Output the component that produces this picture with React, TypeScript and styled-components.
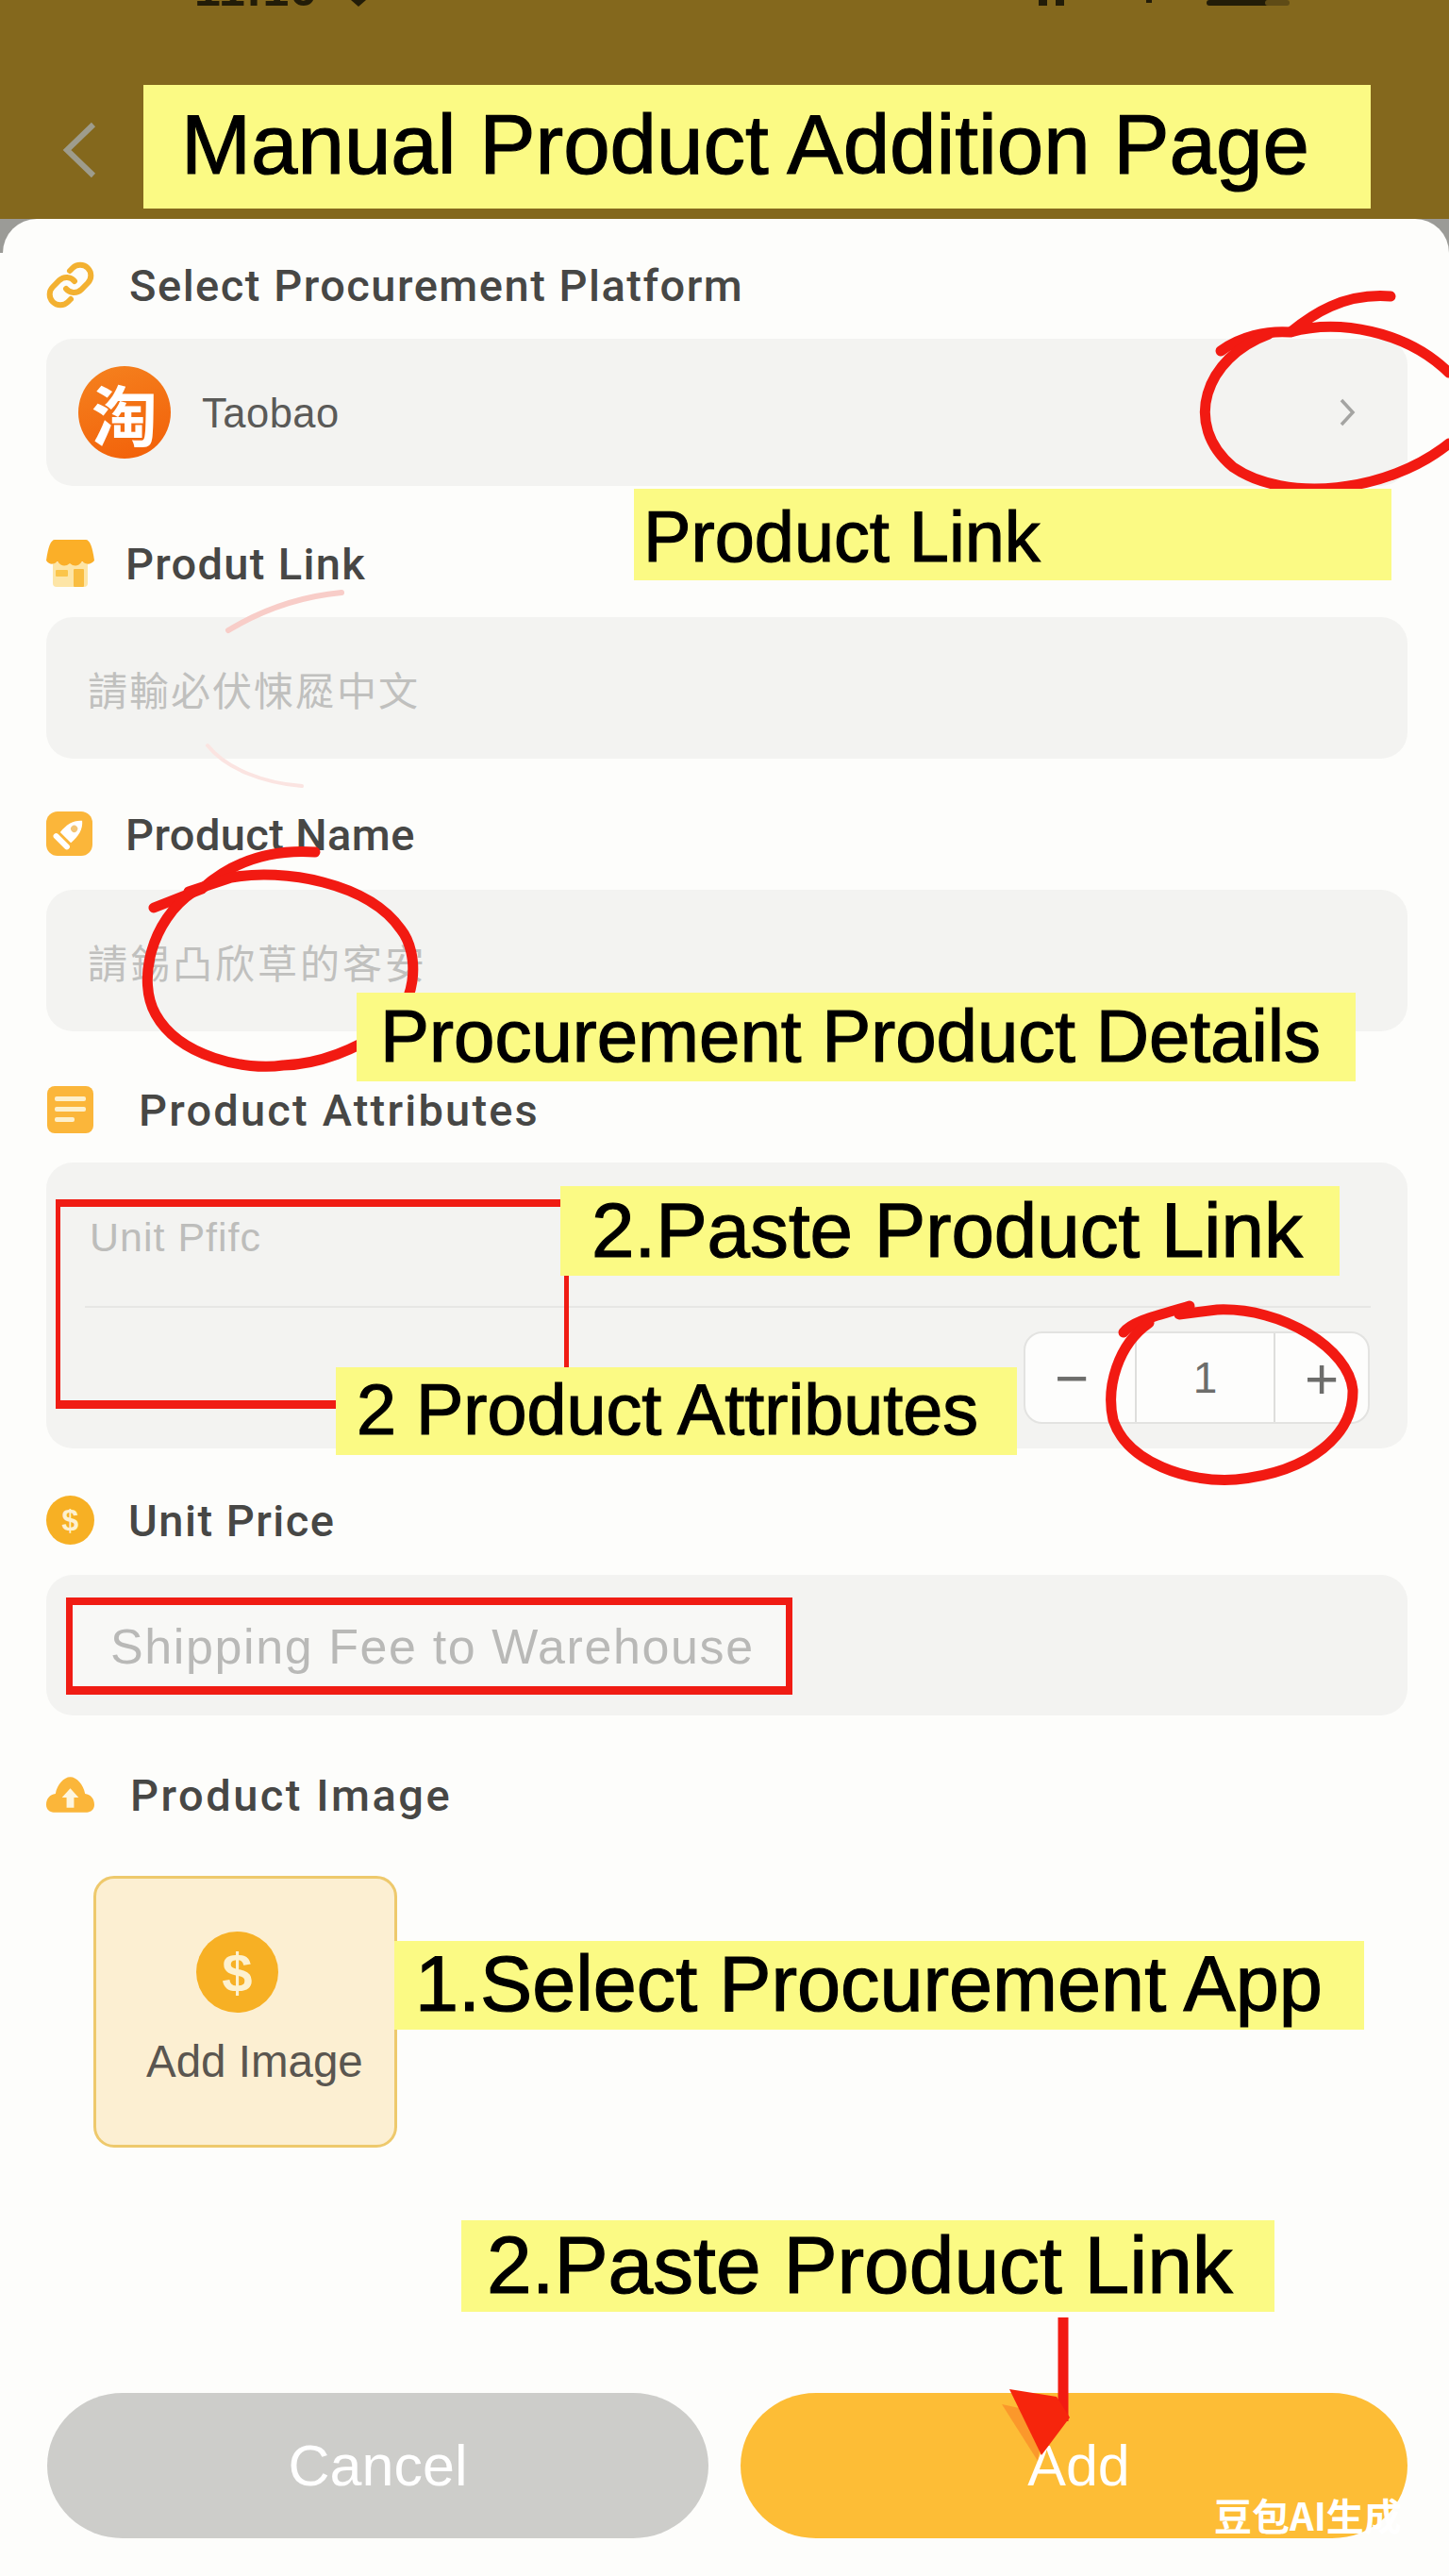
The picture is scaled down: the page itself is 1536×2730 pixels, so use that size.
import React from "react"
import styled, {createGlobalStyle} from "styled-components"

const GlobalStyle = createGlobalStyle`
  html, body {
    margin: 0;
    padding: 0;
    background: #fdfdfb;
  }
  * {
    box-sizing: border-box;
  }
`

const Screen = styled.div`
  position: relative;
  width: 1536px;
  height: 2730px;
  overflow: hidden;
  font-family: "Liberation Sans", Arial, sans-serif;
  background: linear-gradient(#9b9b97 0 268px, #fdfdfb 268px);
`

const Header = styled.header`
  height: 232px;
  background: #84681d;
`

const StatusBar = styled.div`
  display: flex;
  justify-content: space-between;
  align-items: flex-end;
  height: 7px;
  padding: 0 150px 0 206px;
  overflow: hidden;
`

const ClockGroup = styled.div`
  display: flex;
  align-items: flex-end;
  gap: 34px;
`

const Clock = styled.span`
  font-size: 50px;
  font-weight: 700;
  line-height: 0.72;
  letter-spacing: 1px;
  color: #221c08;
`

const NavRow = styled.div`
  display: flex;
  align-items: center;
  gap: 49px;
  padding: 83px 0 0 66px;
`

const BackIcon = styled.svg`
  width: 37px;
  height: 60px;
  margin-top: 6px;
  flex-shrink: 0;
`

const TitleNote = styled.h1`
  width: 1301px;
  height: 131px;
  margin: 0;
  padding-left: 40px;
  background: #fbfa84;
  color: #000;
  font-size: 88.9px;
  font-weight: 400;
  line-height: 127px;
  white-space: nowrap;
  -webkit-text-stroke: 1.2px #000;
`

const Card = styled.main`
  height: 2498px;
  margin-left: 3px;
  padding: 45px 44px 0 46px;
  background: #fdfdfb;
  border-radius: 36px 36px 0 0;
`

const Section = styled.section<{$top: number}>`
  margin-top: ${(p) => p.$top}px;
`

const Label = styled.div<{$gap: number; $spacing: number; $mb: number}>`
  display: flex;
  align-items: center;
  gap: ${(p) => p.$gap}px;
  height: 50px;
  margin-bottom: ${(p) => p.$mb}px;
  font-family: Roboto, "Liberation Sans", sans-serif;
  font-size: 47px;
  font-weight: 500;
  letter-spacing: ${(p) => p.$spacing}px;
  color: #474745;
  white-space: nowrap;
`

const IconSvg = styled.svg`
  width: 51px;
  height: 50px;
  flex-shrink: 0;
`

const Coin = styled.span<{$w: number; $h: number; $size: number}>`
  display: flex;
  align-items: center;
  justify-content: center;
  flex-shrink: 0;
  width: ${(p) => p.$w}px;
  height: ${(p) => p.$h}px;
  border-radius: 50%;
  background: #f7b024;
  color: #fdf1cf;
  font-family: "Liberation Sans", sans-serif;
  font-size: ${(p) => p.$size}px;
  font-weight: 700;
  letter-spacing: 0;
`

const Field = styled.div<{$h: number; $pad: number}>`
  display: flex;
  align-items: center;
  height: ${(p) => p.$h}px;
  padding-left: ${(p) => p.$pad}px;
  background: #f3f3f1;
  border-radius: 28px;
`

const Placeholder = styled.span<{$size: number; $spacing: number}>`
  font-family: "Noto Sans CJK TC", "Liberation Sans", sans-serif;
  font-size: ${(p) => p.$size}px;
  font-weight: 400;
  letter-spacing: ${(p) => p.$spacing}px;
  color: #c0c0be;
  white-space: nowrap;
`

const WidePlaceholder = styled(Placeholder)`
  margin-top: 3px;
  font-family: "Liberation Sans", sans-serif;
  color: #8a8a87;
`

const PlatformRow = styled.div`
  display: flex;
  align-items: center;
  justify-content: space-between;
  height: 156px;
  padding: 0 55px 0 34px;
  background: #f3f3f1;
  border-radius: 28px;
`

const PlatformInfo = styled.div`
  display: flex;
  align-items: center;
  gap: 33px;
`

const PlatformLogo = styled.span`
  display: flex;
  align-items: center;
  justify-content: center;
  width: 98px;
  height: 98px;
  border-radius: 50%;
  background: linear-gradient(160deg, #f5821f, #f25f08);
  color: #fff;
  font-family: "Noto Sans CJK SC", sans-serif;
  font-size: 70px;
  font-weight: 700;
`

const PlatformName = styled.span`
  margin-top: 3px;
  font-size: 43.5px;
  letter-spacing: 0.5px;
  color: #5a5a58;
`

const ChevronIcon = styled.svg`
  width: 18px;
  height: 30px;
`

const AttrBox = styled.div`
  height: 303px;
  background: #f3f3f1;
  border-radius: 28px;
`

const AttrTop = styled.div`
  height: 152px;
  padding: 55px 0 0 46px;
`

const AttrHint = styled.span`
  font-size: 43px;
  letter-spacing: 1px;
  color: #bdbdbb;
`

const AttrDivider = styled.div`
  height: 2px;
  margin: 0 39px 0 41px;
  background: #e6e6e4;
`

const AttrBottom = styled.div`
  display: flex;
  justify-content: flex-end;
  padding: 25px 40px 0 0;
`

const Stepper = styled.div`
  display: flex;
  height: 98px;
  background: #fdfdfc;
  border: 2px solid #e3e3e1;
  border-radius: 20px;
`

const StepCell = styled.div<{$w: number; $size: number; $inset?: number; $divider?: boolean}>`
  display: flex;
  align-items: center;
  justify-content: center;
  width: ${(p) => p.$w}px;
  padding-right: ${(p) => p.$inset ?? 0}px;
  border-left: ${(p) => (p.$divider ? "2px solid #dededc" : "none")};
  font-size: ${(p) => p.$size}px;
  font-weight: 300;
  color: #6d6d6b;
`

const ImageTile = styled.div`
  display: flex;
  flex-direction: column;
  align-items: flex-start;
  width: 322px;
  height: 288px;
  margin-left: 50px;
  padding-top: 56px;
  background: #fcefd2;
  border: 3px solid #eec96c;
  border-radius: 22px;
`

const CoinSlot = styled.div`
  margin-left: 106px;
`

const TileText = styled.span`
  margin: 24px 0 0 53px;
  font-size: 47.5px;
  color: #5a5650;
`

const Actions = styled.div`
  display: flex;
  gap: 34px;
  margin: 260px 0 0 1px;
`

const ActionButton = styled.button<{$w: number; $bg: string; $shift?: number}>`
  width: ${(p) => p.$w}px;
  height: 154px;
  padding: 0 0 0 ${(p) => p.$shift ?? 0}px;
  border: none;
  border-radius: 80px / 77px;
  background: ${(p) => p.$bg};
  color: #fff;
  font-family: "Liberation Sans", sans-serif;
  font-size: 61px;
`

const Overlay = styled.svg`
  position: absolute;
  top: 0;
  left: 0;
  width: 1536px;
  height: 2730px;
  pointer-events: none;
`

const RedFrame = styled.div<{
  $x: number
  $y: number
  $w: number
  $h: number
  $bt: number
  $bs: number
  $bb: number
  $fill: string
}>`
  position: absolute;
  left: ${(p) => p.$x}px;
  top: ${(p) => p.$y}px;
  width: ${(p) => p.$w}px;
  height: ${(p) => p.$h}px;
  background: ${(p) => p.$fill};
  border-style: solid;
  border-color: #f01c14;
  border-width: ${(p) => `${p.$bt}px ${p.$bs}px ${p.$bb}px`};
`

const Note = styled.div<{
  $x: number
  $y: number
  $w: number
  $h: number
  $lh: number
  $pad: number
  $size: number
}>`
  position: absolute;
  left: ${(p) => p.$x}px;
  top: ${(p) => p.$y}px;
  width: ${(p) => p.$w}px;
  height: ${(p) => p.$h}px;
  padding-left: ${(p) => p.$pad}px;
  background: #fbfa84;
  color: #000;
  font-size: ${(p) => p.$size}px;
  line-height: ${(p) => p.$lh}px;
  white-space: nowrap;
  -webkit-text-stroke: 1.2px #000;
`

const Watermark = styled.div`
  position: absolute;
  left: 1287px;
  top: 2644px;
  font-family: "Noto Sans CJK SC", sans-serif;
  font-size: 40px;
  font-weight: 700;
  line-height: 42px;
  color: #fff;
  white-space: nowrap;
`

const notes = [
  {x: 672, y: 518, w: 803, h: 97, lh: 101, pad: 10, size: 75.7, text: "Product Link"},
  {x: 378, y: 1052, w: 1059, h: 94, lh: 92, pad: 25, size: 78, text: "Procurement Product Details"},
  {x: 594, y: 1257, w: 826, h: 95, lh: 93, pad: 33, size: 81.7, text: "2.Paste Product Link"},
  {x: 356, y: 1449, w: 722, h: 93, lh: 91, pad: 22, size: 75.5, text: "2 Product Attributes"},
  {x: 418, y: 2057, w: 1028, h: 94, lh: 92, pad: 22, size: 82.8, text: "1.Select Procurement App"},
  {x: 489, y: 2353, w: 862, h: 97, lh: 95, pad: 27, size: 85.7, text: "2.Paste Product Link"},
]

const StoreIcon = () => (
  <IconSvg viewBox="0 0 51 50">
    <path d="M7 24h37v22q0 4-4 4H11q-4 0-4-4z" fill="#fde5a6" />
    <path d="M9 0h33q6 0 9 22q-6 7-13 1q-6 8-13 2q-7 6-13-2q-7 6-12-1Q3 0 9 0z" fill="#fbaf28" />
    <rect x="10" y="32" width="13" height="7" rx="1" fill="#fbc54a" />
    <rect x="29" y="31" width="11" height="19" rx="1" fill="#f9bd40" />
  </IconSvg>
)

const TagIcon = () => (
  <IconSvg viewBox="0 0 51 50">
    <rect x="0" y="1" width="49" height="47" rx="12" fill="#fbb63a" />
    <g transform="rotate(45 24 25)">
      <path d="M24 5c7 6 9 14 8 25H16c-1-11 1-19 8-25z" fill="#fff" />
      <rect x="13" y="33" width="22" height="6" rx="3" fill="#fff" />
      <circle cx="24" cy="17" r="3.6" fill="#f3c474" />
    </g>
  </IconSvg>
)

const ListIcon = () => (
  <IconSvg viewBox="0 0 51 50">
    <rect x="1" y="0" width="49" height="50" rx="8" fill="#fbb63a" />
    <rect x="9" y="11" width="33" height="5" rx="2" fill="#fdf0cc" />
    <rect x="9" y="22" width="33" height="5" rx="2" fill="#fdf0cc" />
    <rect x="9" y="33" width="21" height="5" rx="2" fill="#fdf0cc" />
  </IconSvg>
)

const CloudIcon = () => (
  <IconSvg viewBox="0 0 52 50">
    <path
      d="M0 36c0-7 4-11 10-12C12 14 19 6 26 6s14 8 16 18c6 1 10 5 10 12c0 5-4 8-8 8H8c-4 0-8-3-8-8z"
      fill="#fbb63a"
    />
    <path d="M26 18l9 10h-5v11h-8V28h-5z" fill="#fdf6e0" />
  </IconSvg>
)

const ChainIcon = () => (
  <IconSvg viewBox="0 0 51 50" fill="none" stroke="#f3b131" strokeWidth="6" strokeLinecap="round">
    <path d="M21 29a11 11 0 0 0 16 1l7-7a11 11 0 0 0-16-16l-3 3" />
    <path d="M30 21a11 11 0 0 0-16-1l-7 7a11 11 0 0 0 16 16l3-3" />
  </IconSvg>
)

const App = () => (
  <Screen>
    <GlobalStyle />
    <Header>
      <StatusBar>
        <ClockGroup>
          <Clock>11:16</Clock>
          <svg width="20" height="7" viewBox="0 0 20 7">
            <path d="M2 0h16l-8 7z" fill="#221c08" />
          </svg>
        </ClockGroup>
        <svg width="290" height="7" viewBox="0 0 290 7">
          <rect x="5" y="0" width="9" height="6" fill="#221c08" />
          <rect x="23" y="0" width="9" height="6" fill="#221c08" />
          <rect x="119" y="0" width="6" height="3" fill="#221c08" />
          <rect x="183" y="0" width="66" height="6" rx="3" fill="#221c08" />
          <rect x="245" y="0" width="26" height="6" rx="3" fill="#5f4b16" />
        </svg>
      </StatusBar>
      <NavRow>
        <BackIcon viewBox="0 0 37 60" fill="none" stroke="#9e9c8c" strokeWidth="6">
          <polyline points="33,3 5,30 33,57" />
        </BackIcon>
        <TitleNote>Manual Product Addition Page</TitleNote>
      </NavRow>
    </Header>

    <Card>
      <Section $top={0}>
        <Label $gap={37} $spacing={1.5} $mb={32}>
          <ChainIcon />
          Select Procurement Platform
        </Label>
        <PlatformRow>
          <PlatformInfo>
            <PlatformLogo>淘</PlatformLogo>
            <PlatformName>Taobao</PlatformName>
          </PlatformInfo>
          <ChevronIcon viewBox="0 0 18 30" fill="none" stroke="#a4a4a2" strokeWidth="3.5">
            <polyline points="3,2 15,15 3,28" />
          </ChevronIcon>
        </PlatformRow>
      </Section>

      <Section $top={57}>
        <Label $gap={33} $spacing={1.3} $mb={32}>
          <StoreIcon />
          Produt Link
        </Label>
        <Field $h={150} $pad={44}>
          <Placeholder $size={42} $spacing={2}>
            請輸必伏悚㞞中文
          </Placeholder>
        </Field>
      </Section>

      <Section $top={55}>
        <Label $gap={33} $spacing={0.4} $mb={34}>
          <TagIcon />
          Product Name
        </Label>
        <Field $h={150} $pad={44}>
          <Placeholder $size={42} $spacing={3}>
            請錫凸欣草的客安
          </Placeholder>
        </Field>
      </Section>

      <Section $top={58}>
        <Label $gap={47} $spacing={2.2} $mb={31}>
          <ListIcon />
          Product Attributes
        </Label>
        <AttrBox>
          <AttrTop>
            <AttrHint>Unit Pfifc</AttrHint>
          </AttrTop>
          <AttrDivider />
          <AttrBottom>
            <Stepper>
              <StepCell $w={116} $size={62} $inset={18}>
                −
              </StepCell>
              <StepCell $w={147} $size={46} $divider>
                1
              </StepCell>
              <StepCell $w={100} $size={62} $divider>
                +
              </StepCell>
            </Stepper>
          </AttrBottom>
        </AttrBox>
      </Section>

      <Section $top={51}>
        <Label $gap={36} $spacing={1.5} $mb={33}>
          <Coin $w={51} $h={52} $size={32}>
            $
          </Coin>
          Unit Price
        </Label>
        <Field $h={149} $pad={68}>
          <WidePlaceholder $size={52} $spacing={1.6}>
            Shipping Fee to Warehouse
          </WidePlaceholder>
        </Field>
      </Section>

      <Section $top={59}>
        <Label $gap={38} $spacing={2.5} $mb={61}>
          <CloudIcon />
          Product Image
        </Label>
        <ImageTile>
          <CoinSlot>
            <Coin $w={87} $h={86} $size={58}>
              $
            </Coin>
          </CoinSlot>
          <TileText>Add Image</TileText>
        </ImageTile>
      </Section>

      <Actions>
        <ActionButton $w={702} $bg="#cdcdca">
          Cancel
        </ActionButton>
        <ActionButton $w={708} $bg="#fdbd36" $shift={10}>
          Add
        </ActionButton>
      </Actions>
    </Card>

    <RedFrame $x={59} $y={1271} $w={544} $h={222} $bt={8} $bs={5} $bb={9} $fill="transparent" />
    <RedFrame
      $x={70}
      $y={1693}
      $w={770}
      $h={103}
      $bt={8}
      $bs={7}
      $bb={9}
      $fill="rgba(255, 255, 255, 0.4)"
    />

    <Overlay viewBox="0 0 1536 2730" fill="none" stroke="#f21a12" strokeWidth="11" strokeLinecap="round">
      <path d="M1474 314c-50-4-84 20-106 38c50-14 122-2 168 43" />
      <path d="M1294 372c20-15 49-22 74-20" />
      <path d="M1345 354c-68 25-92 96-38 141c55 38 163 28 229-25" />
      <path d="M334 903c-44-3-84 7-120 39l-51 20" />
      <path d="M205 945c-45 30-60 95-40 130c25 45 95 60 135 54c40-1 80-19 100-34c45-25 45-85 25-110c-35-50-125-65-180-55l-45 15" />
      <path d="M1261 1384c-36 11-61 16-70 28" />
      <path d="M1218 1402c-33 23-46 68-38 103c15 45 80 67 130 63c80-8 125-48 124-95c-4-43-74-88-144-85l-40 5" />
      <path d="M242 668c38-23 78-36 120-40" stroke="#f8cdc8" strokeWidth="6" />
      <path d="M220 790c20 25 60 40 100 43" stroke="#fbe4e1" strokeWidth="4" />
      <path d="M1127 2456v110" strokeWidth="11" strokeLinecap="butt" />
      <path d="M1062 2548l38 60l8-50z" fill="#f98c28" stroke="none" opacity="0.75" />
      <path d="M1070 2532l50 8l14 22l-30 40z" fill="#f6250c" stroke="none" />
    </Overlay>

    {notes.map((n) => (
      <Note key={n.y} $x={n.x} $y={n.y} $w={n.w} $h={n.h} $lh={n.lh} $pad={n.pad} $size={n.size}>
        {n.text}
      </Note>
    ))}

    <Watermark>豆包AI生成</Watermark>
  </Screen>
)

export default App
